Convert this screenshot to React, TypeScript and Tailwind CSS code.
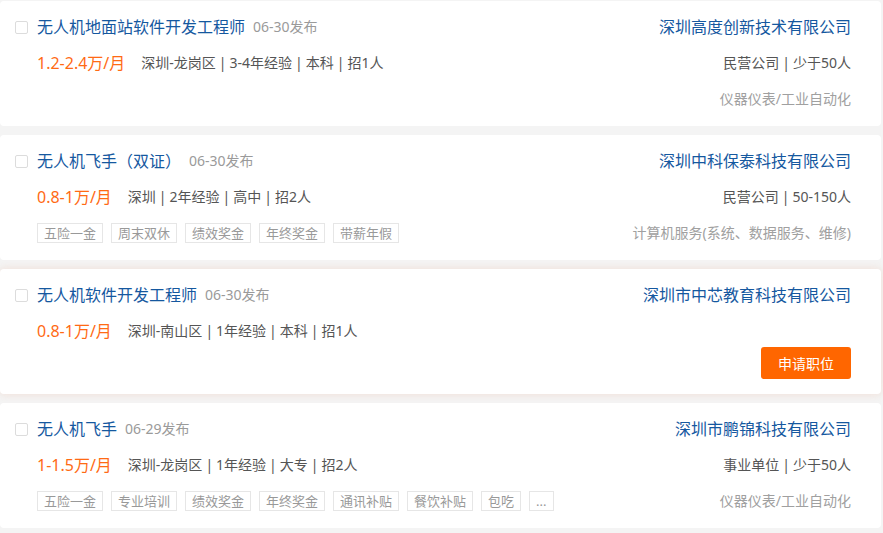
const jobs = [
  {
    title: "无人机地面站软件开发工程师",
    date: "06-30发布",
    salary: "1.2-2.4万/月",
    details: ["深圳-龙岗区", "3-4年经验", "本科", "招1人"],
    tags: [] as string[],
    company: "深圳高度创新技术有限公司",
    info: ["民营公司", "少于50人"],
    industry: "仪器仪表/工业自动化",
    apply: false,
  },
  {
    title: "无人机飞手（双证）",
    date: "06-30发布",
    salary: "0.8-1万/月",
    details: ["深圳", "2年经验", "高中", "招2人"],
    tags: ["五险一金", "周末双休", "绩效奖金", "年终奖金", "带薪年假"],
    company: "深圳中科保泰科技有限公司",
    info: ["民营公司", "50-150人"],
    industry: "计算机服务(系统、数据服务、维修)",
    apply: false,
  },
  {
    title: "无人机软件开发工程师",
    date: "06-30发布",
    salary: "0.8-1万/月",
    details: ["深圳-南山区", "1年经验", "本科", "招1人"],
    tags: [] as string[],
    company: "深圳市中芯教育科技有限公司",
    info: [] as string[],
    industry: "",
    apply: true,
  },
  {
    title: "无人机飞手",
    date: "06-29发布",
    salary: "1-1.5万/月",
    details: ["深圳-龙岗区", "1年经验", "大专", "招2人"],
    tags: ["五险一金", "专业培训", "绩效奖金", "年终奖金", "通讯补贴", "餐饮补贴", "包吃", "..."],
    company: "深圳市鹏锦科技有限公司",
    info: ["事业单位", "少于50人"],
    industry: "仪器仪表/工业自动化",
    apply: false,
  },
];

function Piped({ items }: { items: string[] }) {
  return (
    <>
      {items.map((item, i) => (
        <span key={item} className="flex items-center">
          {i > 0 && <span className="mx-[3px]">|</span>}
          {item}
        </span>
      ))}
    </>
  );
}

export default function App() {
  return (
    <div
      className="flex min-h-[533px] w-[883px] flex-col gap-[9px] bg-[#f4f4f4] pt-px pr-[2px]"
      style={{ fontFamily: '"Noto Sans", "Noto Sans CJK SC", sans-serif' }}
    >
      {jobs.map((job) => (
        <div
          key={job.title + job.date}
          className={`flex h-[125px] justify-between rounded-[4px] bg-white pt-4 pr-[30px] pl-[15px] ${
            job.apply ? "shadow-[0_0_9px_rgba(235,160,130,0.28)]" : ""
          }`}
        >
          {/* Left: job */}
          <div className="flex flex-col">
            <div className="flex h-5 items-center">
              <span className="mr-[9px] h-[13px] w-[13px] rounded-[2px] border border-[#dcdcdc] bg-white" />
              <span className="text-[16px] leading-5 text-[#15589f]">{job.title}</span>
              <span className="ml-2 text-[14px] leading-5 text-[#9a9a9a]">{job.date}</span>
            </div>

            <div className="mt-4 flex h-5 items-center pl-[22px]">
              <span className="text-[16px] leading-5 text-[#ff6a14]">{job.salary}</span>
              <span className="ml-4 flex text-[14px] leading-5 text-[#555]">
                <Piped items={job.details} />
              </span>
            </div>

            {job.tags.length > 0 && (
              <div className="mt-4 flex gap-2 pl-[22px]">
                {job.tags.map((tag) => (
                  <span
                    key={tag}
                    className="flex h-5 items-center border border-[#e6e6e6] px-[6px] text-[13px] leading-5 text-[#999]"
                  >
                    {tag}
                  </span>
                ))}
              </div>
            )}
          </div>

          {/* Right: company */}
          <div className="flex flex-col items-end">
            <span className="text-[16px] leading-5 text-[#15589f]">{job.company}</span>
            {job.info.length > 0 && (
              <span className="mt-4 flex text-[14px] leading-5 text-[#555]">
                <Piped items={job.info} />
              </span>
            )}
            {job.industry && (
              <span className="mt-4 text-[14px] leading-5 text-[#a0a0a0]">{job.industry}</span>
            )}
            {job.apply && (
              <button
                type="button"
                className="mt-[42px] h-8 w-[90px] rounded-[3px] bg-[#ff6600] text-[14px] text-white"
              >
                申请职位
              </button>
            )}
          </div>
        </div>
      ))}
    </div>
  );
}
